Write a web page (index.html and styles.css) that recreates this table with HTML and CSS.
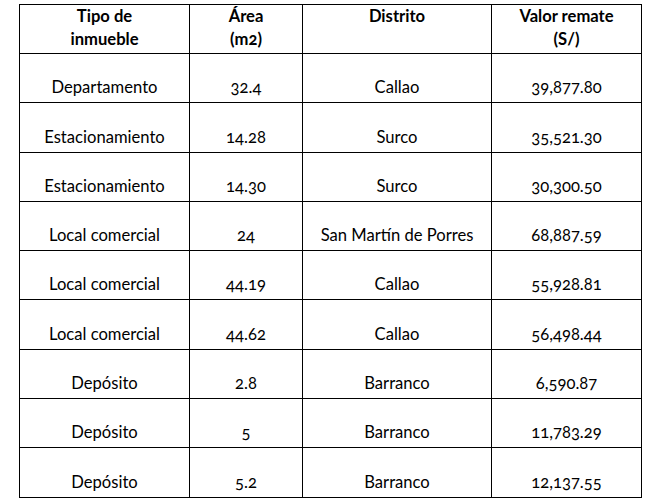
FILE: index.html
```html
<!DOCTYPE html>
<html lang="es">
<head>
<meta charset="utf-8">
<link rel="stylesheet" href="styles.css">
</head>
<body>
<table class="tabla">
  <colgroup>
    <col class="c1"><col class="c2"><col class="c3"><col class="c4">
  </colgroup>
  <thead>
    <tr class="head">
      <th>Tipo de<br>inmueble</th>
      <th>Área<br>(m2)</th>
      <th>Distrito</th>
      <th>Valor remate<br>(S/)</th>
    </tr>
  </thead>
  <tbody>
    <tr><td>Departamento</td><td>32.4</td><td>Callao</td><td>39,877.80</td></tr>
    <tr><td>Estacionamiento</td><td>14.28</td><td>Surco</td><td>35,521.30</td></tr>
    <tr><td>Estacionamiento</td><td>14.30</td><td>Surco</td><td>30,300.50</td></tr>
    <tr><td>Local comercial</td><td>24</td><td>San Martín de Porres</td><td>68,887.59</td></tr>
    <tr><td>Local comercial</td><td>44.19</td><td>Callao</td><td>55,928.81</td></tr>
    <tr><td>Local comercial</td><td>44.62</td><td>Callao</td><td>56,498.44</td></tr>
    <tr><td>Depósito</td><td>2.8</td><td>Barranco</td><td>6,590.87</td></tr>
    <tr><td>Depósito</td><td>5</td><td>Barranco</td><td>11,783.29</td></tr>
    <tr><td>Depósito</td><td>5.2</td><td>Barranco</td><td>12,137.55</td></tr>
  </tbody>
</table>
</body>
</html>
```
FILE: styles.css
```css
html, body {
  margin: 0;
  padding: 0;
  background: #ffffff;
}
body {
  padding: 4px 0 0 19px;
  font-family: "Lato", "Open Sans", sans-serif;
  color: #000;
}
.tabla {
  border-collapse: collapse;
  table-layout: fixed;
  width: 622px;
  font-size: 16.6px;
  font-variant-numeric: oldstyle-nums;
  font-feature-settings: "onum" 1;
}
.c1 { width: 170px; }
.c2 { width: 113px; }
.c3 { width: 189px; }
.c4 { width: 150px; }
.tabla th, .tabla td {
  border: 1px solid #000;
  text-align: center;
  padding: 0 4px;
}
.tabla th {
  font-weight: bold;
  vertical-align: top;
  line-height: 23px;
  height: 48px;
}
.tabla td {
  vertical-align: bottom;
  height: 49.3px;
  padding-bottom: 5px;
  box-sizing: border-box;
  line-height: 19px;
}
```
